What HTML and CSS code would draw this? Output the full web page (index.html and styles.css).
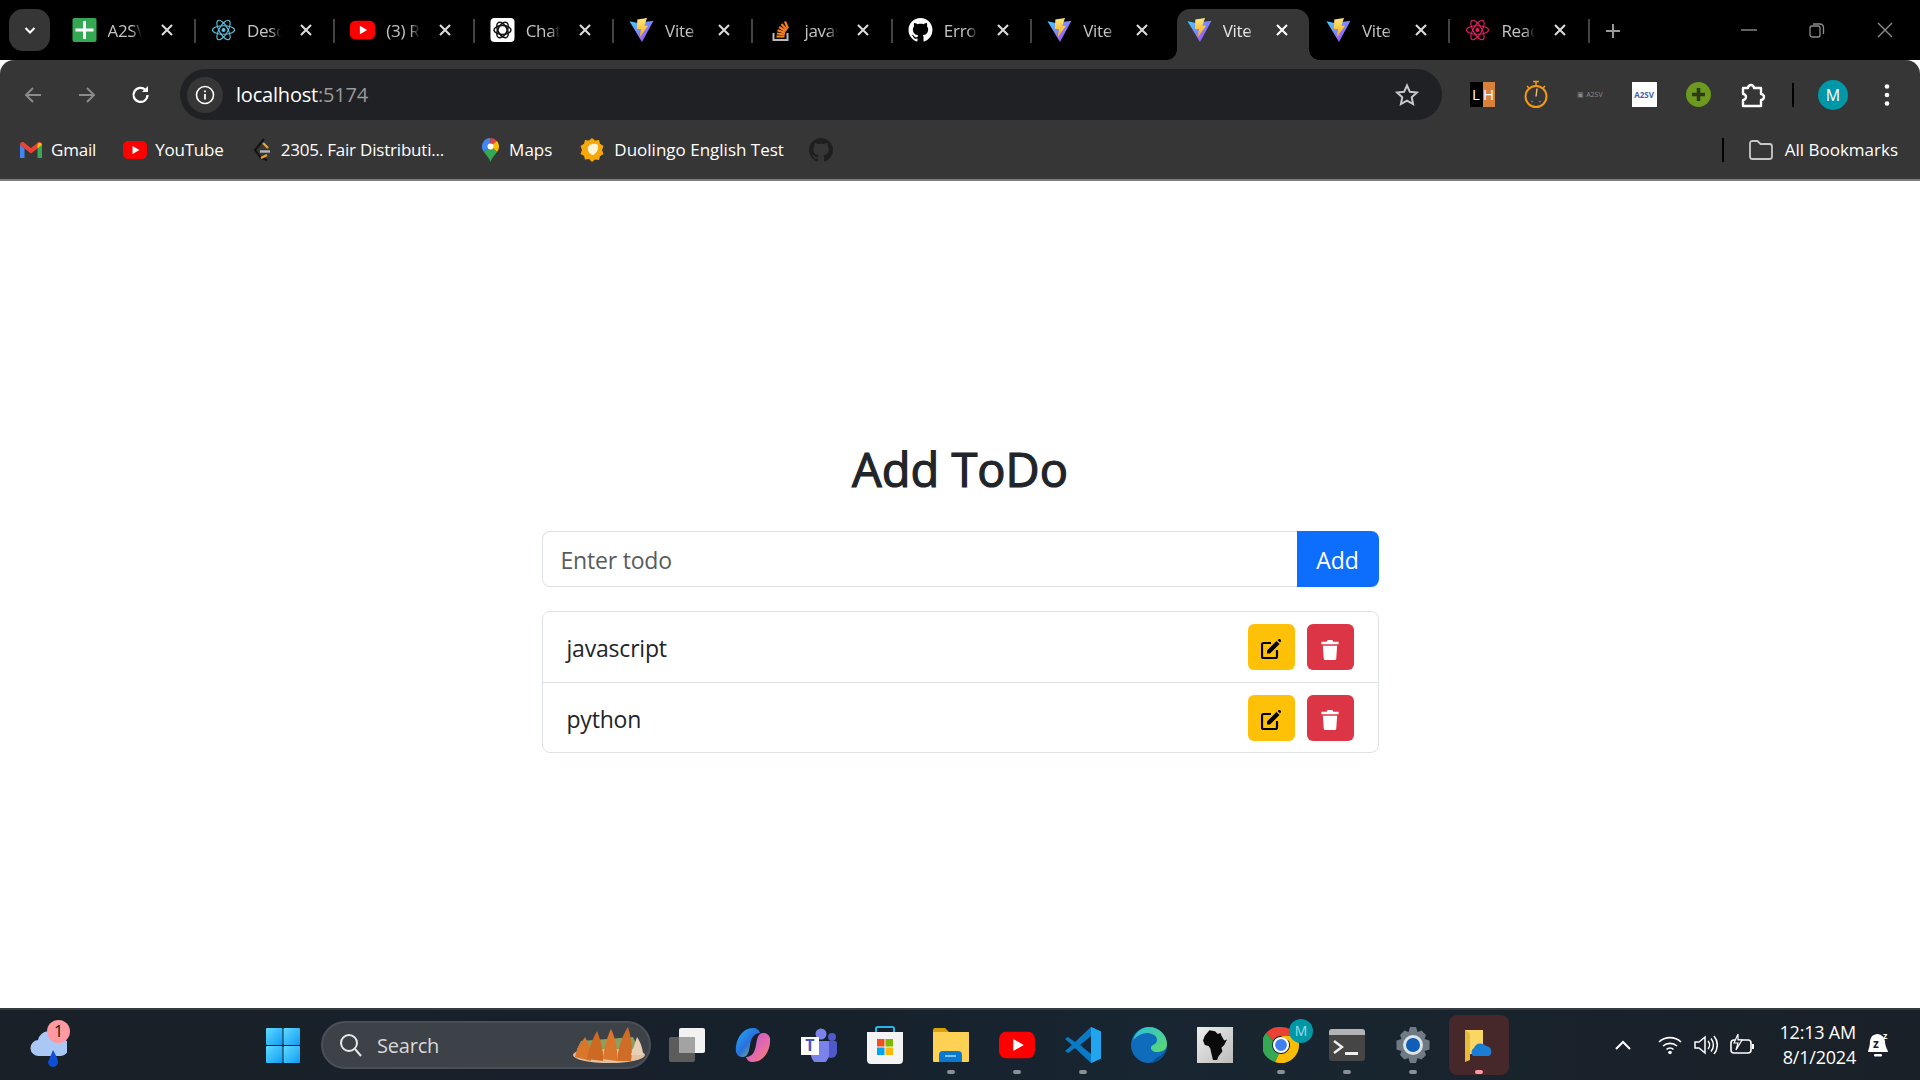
FILE: index.html
```html
<!DOCTYPE html>
<html lang="en">
<head>
  <meta charset="UTF-8" />
  <title>Vite + React</title>
  <link rel="stylesheet" href="styles.css">
</head>
<body>
  <svg class="sprite" xmlns="http://www.w3.org/2000/svg">
    <defs>
      <linearGradient id="viteBody" x1="0" y1="0" x2="1" y2="1">
        <stop offset="0%" stop-color="#41d1ff" />
        <stop offset="100%" stop-color="#bd34fe" />
      </linearGradient>
      <linearGradient id="viteBolt" x1="0" y1="0" x2="0" y2="1">
        <stop offset="0%" stop-color="#ffea83" />
        <stop offset="100%" stop-color="#ffa800" />
      </linearGradient>
      <linearGradient id="copilotA" x1="0" y1="0" x2="1" y2="1">
        <stop offset="0%" stop-color="#1fb4f0" />
        <stop offset="50%" stop-color="#2a6fe0" />
        <stop offset="100%" stop-color="#9fd04a" />
      </linearGradient>
      <linearGradient id="copilotB" x1="0" y1="0" x2="1" y2="1">
        <stop offset="0%" stop-color="#b05ad8" />
        <stop offset="60%" stop-color="#e86aa8" />
        <stop offset="100%" stop-color="#f58a50" />
      </linearGradient>
      <linearGradient id="winLogo" x1="0" y1="0" x2="1" y2="1">
        <stop offset="0%" stop-color="#5fdcff" />
        <stop offset="100%" stop-color="#0f9bf5" />
      </linearGradient>
      <linearGradient id="edgeWave" x1="0" y1="0" x2="1" y2="1">
        <stop offset="0%" stop-color="#2ac0d8" />
        <stop offset="100%" stop-color="#5fd96e" />
      </linearGradient>
      <symbol id="vite" viewBox="0 0 26 26">
        <path d="M0 3.500 L9 5.500 L18 4 L26 3 L13.500 26 Z" fill="url(#viteBody)" />
        <path d="M8.500 1.500 L19 0 L16 8.500 L20 8.500 L11 21 L12.500 12 L8 12 Z" fill="url(#viteBolt)" />
      </symbol>
      <symbol id="youtube" viewBox="0 0 24 18">
        <rect width="24" height="18" rx="5" fill="#f00" />
        <path d="M9.500 5 L16.500 9 L9.500 13 Z" fill="#fff" />
      </symbol>
      <symbol id="github" viewBox="0 0 16 16">
        <path d="M8 0C3.580 0 0 3.580 0 8c0 3.540 2.290 6.530 5.470 7.590.4.070.55-.17.55-.38 0-.19-.01-.82-.01-1.490-2.010.37-2.530-.49-2.690-.94-.09-.23-.48-.94-.82-1.130-.28-.15-.68-.52-.01-.53.63-.01 1.080.58 1.230.82.72 1.210 1.870.87 2.330.66.07-.52.28-.87.51-1.070-1.780-.2-3.640-.89-3.640-3.950 0-.87.31-1.590.82-2.150-.08-.2-.36-1.020.08-2.120 0 0 .67-.21 2.200.82.64-.18 1.320-.27 2-.27s1.360.09 2 .27c1.530-1.040 2.200-.82 2.200-.82.44 1.100.16 1.920.08 2.120.51.56.82 1.270.82 2.150 0 3.070-1.870 3.750-3.650 3.950.29.25.54.73.54 1.480 0 1.070-.01 1.930-.01 2.200 0 .21.15.46.55.38A8.010 8.010 0 0 0 16 8c0-4.420-3.580-8-8-8z" fill="currentColor" />
      </symbol>
      <symbol id="react" viewBox="0 0 24 24">
        <g fill="none" stroke="currentColor" stroke-width="1.100">
          <ellipse cx="12" cy="12" rx="11" ry="4.300" />
          <ellipse cx="12" cy="12" rx="11" ry="4.300" transform="rotate(60 12 12)" />
          <ellipse cx="12" cy="12" rx="11" ry="4.300" transform="rotate(120 12 12)" />
        </g>
        <circle cx="12" cy="12" r="2" fill="currentColor" />
      </symbol>
      <symbol id="close" viewBox="0 0 12 12">
        <path d="M1 1 L11 11 M11 1 L1 11" stroke="currentColor" stroke-width="2.100" fill="none" />
      </symbol>
      <symbol id="running" viewBox="0 0 8 4"><rect width="8" height="4" rx="2" fill="currentColor" /></symbol>
    </defs>
  </svg>

  <header class="tabstrip">
    <button class="tab-search">
      <svg width="14" height="14" viewBox="0 0 14 14"><path d="M2.500 5 L7 9.500 L11.500 5" fill="none" stroke="#fff" stroke-width="2" /></svg>
    </button>
    <div class="tabs">
      <div class="tab">
        <svg class="tab-icon" viewBox="0 0 24 24"><rect width="24" height="24" rx="2" fill="#34a853" /><path d="M10.500 3h3v7.500H21v3h-7.500V21h-3v-7.500H3v-3h7.500z" fill="#fff" /></svg>
        <span class="tab-title">A2SV</span>
        <svg class="tab-close"><use href="#close" /></svg>
      </div>
      <div class="tab">
        <svg class="tab-icon icon-react-blue"><use href="#react" /></svg>
        <span class="tab-title">Describing</span>
        <svg class="tab-close"><use href="#close" /></svg>
      </div>
      <div class="tab">
        <svg class="tab-icon"><use href="#youtube" /></svg>
        <span class="tab-title">(3) React</span>
        <svg class="tab-close"><use href="#close" /></svg>
      </div>
      <div class="tab">
        <svg class="tab-icon" viewBox="0 0 24 24"><rect width="24" height="24" rx="4" fill="#fff" /><g fill="none" stroke="#111" stroke-width="1.500"><ellipse cx="12" cy="12" rx="8.500" ry="4.500" /><ellipse cx="12" cy="12" rx="8.500" ry="4.500" transform="rotate(60 12 12)" /><ellipse cx="12" cy="12" rx="8.500" ry="4.500" transform="rotate(120 12 12)" /></g></svg>
        <span class="tab-title">ChatGPT</span>
        <svg class="tab-close"><use href="#close" /></svg>
      </div>
      <div class="tab">
        <svg class="tab-icon"><use href="#vite" /></svg>
        <span class="tab-title">Vite + React</span>
        <svg class="tab-close"><use href="#close" /></svg>
      </div>
      <div class="tab">
        <svg class="tab-icon" viewBox="0 0 24 24"><path d="M5 15v7h14v-7" fill="none" stroke="#bcbbbb" stroke-width="2" /><g stroke="#f48024" stroke-width="2.200"><path d="M8 18.500h8" /><path d="M8.300 15.500l8 1" /><path d="M9 12.300l7.600 2.600" /><path d="M10.600 9l6.800 4.200" /><path d="M13 6l5.400 6" /><path d="M16.500 3.500l3 7" /></g></svg>
        <span class="tab-title">javascript</span>
        <svg class="tab-close"><use href="#close" /></svg>
      </div>
      <div class="tab">
        <svg class="tab-icon icon-white"><use href="#github" /></svg>
        <span class="tab-title">Error</span>
        <svg class="tab-close"><use href="#close" /></svg>
      </div>
      <div class="tab tab-before-active">
        <svg class="tab-icon"><use href="#vite" /></svg>
        <span class="tab-title">Vite + React</span>
        <svg class="tab-close"><use href="#close" /></svg>
      </div>
      <div class="tab active">
        <svg class="tab-icon"><use href="#vite" /></svg>
        <span class="tab-title">Vite + React</span>
        <svg class="tab-close"><use href="#close" /></svg>
      </div>
      <div class="tab">
        <svg class="tab-icon"><use href="#vite" /></svg>
        <span class="tab-title">Vite + React</span>
        <svg class="tab-close"><use href="#close" /></svg>
      </div>
      <div class="tab">
        <svg class="tab-icon icon-react-pink"><use href="#react" /></svg>
        <span class="tab-title">React App</span>
        <svg class="tab-close"><use href="#close" /></svg>
      </div>
    </div>
    <svg class="new-tab" width="18" height="18" viewBox="0 0 18 18"><path d="M9 2v14M2 9h14" stroke="#9a9a9a" stroke-width="2" /></svg>
    <div class="window-controls">
      <svg width="16" height="16" viewBox="0 0 16 16"><path d="M0 8h16" stroke="#8d8d8d" stroke-width="1.400" /></svg>
      <svg width="16" height="16" viewBox="0 0 16 16"><rect x="1" y="4" width="10" height="11" rx="2" fill="none" stroke="#8d8d8d" stroke-width="1.300" /><path d="M4 2h7a3.500 3.500 0 0 1 3.500 3.500V12" fill="none" stroke="#8d8d8d" stroke-width="1.300" /></svg>
      <svg width="16" height="16" viewBox="0 0 16 16"><path d="M1 1l14 14M15 1L1 15" stroke="#8d8d8d" stroke-width="1.400" /></svg>
    </div>
  </header>

  <nav class="toolbar">
    <div class="nav-btn">
      <svg width="20" height="20" viewBox="0 0 20 20"><path d="M18 10H3M10 3l-7 7 7 7" fill="none" stroke="#8b8b8b" stroke-width="2" /></svg>
    </div>
    <div class="nav-btn">
      <svg width="20" height="20" viewBox="0 0 20 20"><path d="M2 10h15M10 3l7 7-7 7" fill="none" stroke="#8b8b8b" stroke-width="2" /></svg>
    </div>
    <div class="nav-btn">
      <svg width="20" height="20" viewBox="0 0 20 20"><path d="M16.500 10a7 7 0 1 1-2-5" fill="none" stroke="#fff" stroke-width="2.200" /><path d="M17 1v6h-6z" fill="#fff" /></svg>
    </div>
    <div class="address">
      <div class="site-info">
        <svg width="20" height="20" viewBox="0 0 20 20"><circle cx="10" cy="10" r="8.500" fill="none" stroke="#fff" stroke-width="1.600" /><path d="M10 9v5.500M10 5.500v1.800" stroke="#fff" stroke-width="1.800" /></svg>
      </div>
      <span class="url">localhost<span class="url-port">:5174</span></span>
      <svg class="star" width="24" height="24" viewBox="0 0 24 24"><path d="M12 2.500l2.900 6.300 6.900.8-5.100 4.700 1.400 6.800-6.100-3.400-6.100 3.400 1.400-6.800-5.100-4.700 6.900-.8z" fill="none" stroke="#c7c7c7" stroke-width="2" /></svg>
    </div>
    <div class="extensions">
      <div class="ext"><span class="ext-lh"><span class="lh-l">L</span><span class="lh-h">H</span></span></div>
      <div class="ext">
        <svg width="24" height="30" viewBox="0 0 24 30"><path d="M9 1.500h6M12 1.500v4M3 6l2 2M21 6l-2 2" stroke="#f19a12" stroke-width="1.600" /><circle cx="12" cy="16.500" r="10.500" fill="none" stroke="#f19a12" stroke-width="2" /><path d="M12 16.500l1-8" stroke="#e8c27a" stroke-width="1.400" /><path d="M7.500 21.500h1M15.500 21.500h1" stroke="#aaa" stroke-width="1.600" /></svg>
      </div>
      <div class="ext"><span class="ext-apsv-dim">▣ A2SV</span></div>
      <div class="ext"><span class="ext-apsv">A2SV</span></div>
      <div class="ext">
        <svg width="25" height="25" viewBox="0 0 25 25"><circle cx="12.500" cy="12.500" r="12.500" fill="#6c9a1f" /><path d="M12.500 6v13M6 12.500h13" stroke="#2d3a12" stroke-width="3.500" /></svg>
      </div>
      <div class="ext">
        <svg class="ext-puzzle" width="26" height="26" viewBox="0 0 26 26"><path d="M3 6h5a3 3 0 0 1 6 0h7v6a3 3 0 0 1 0 6v6H3v-6a3 3 0 0 0 0-6z" fill="none" stroke="#fff" stroke-width="2.400" stroke-linejoin="round" /></svg>
      </div>
    </div>
    <div class="toolbar-sep"></div>
    <div class="ext"><span class="avatar">M</span></div>
    <div class="ext">
      <svg width="6" height="24" viewBox="0 0 6 24"><circle cx="3" cy="3.500" r="2.300" fill="#fff" /><circle cx="3" cy="12" r="2.300" fill="#fff" /><circle cx="3" cy="20.500" r="2.300" fill="#fff" /></svg>
    </div>
  </nav>

  <div class="bookmarks">
    <a class="bookmark">
      <svg width="22" height="16" viewBox="0 0 22 16"><path d="M0 2.500V16h4.500V6.500z" fill="#4285f4" /><path d="M22 2.500V16h-4.500V6.500z" fill="#34a853" /><path d="M0 2.500C0 .5 2.300-.7 4 .5L11 6l7-5.500c1.700-1.200 4 0 4 2L17.500 6.500 11 11.500 4.500 6.500z" fill="#ea4335" /><path d="M17.500 6.500V2l1-.9c1.500-1 3.500 0 3.500 1.900z" fill="#fbbc04" /></svg>
      Gmail
    </a>
    <a class="bookmark bookmark-yt">
      <svg width="24" height="18"><use href="#youtube" /></svg>
      YouTube
    </a>
    <a class="bookmark bookmark-leet">
      <svg width="20" height="24" viewBox="0 0 20 24"><path d="M12 1L3 12l6 8 6 2" fill="none" stroke="#111" stroke-width="2" /><path d="M11 5l5 5M9 20l6-3" fill="none" stroke="#f0a020" stroke-width="2.400" /><path d="M8 13.500h10" stroke="#b5b5b5" stroke-width="2.400" /></svg>
      2305. Fair Distributi...
    </a>
    <a class="bookmark bookmark-maps">
      <svg width="17" height="24" viewBox="0 0 17 24"><path d="M8.500 0A8.500 8.500 0 0 0 2 14l6.500-6z" fill="#4285f4" /><path d="M8.500 0A8.500 8.500 0 0 1 15 3L8.500 8z" fill="#ea4335" /><path d="M15 3a8.500 8.500 0 0 1 0 11L8.500 8z" fill="#fbbc04" /><path d="M2 14l6.500-6L15 14c-2 3-5.500 6-6.500 10C7.500 20 4 17 2 14z" fill="#34a853" /><circle cx="8.500" cy="8.500" r="3" fill="#fff" /></svg>
      Maps
    </a>
    <a class="bookmark bookmark-duo">
      <svg width="24" height="24" viewBox="0 0 24 24"><path d="M12 0l3 2.500 4-.5 1 3.700 3.500 2.300-1.500 4 1.500 4-3.500 2.300-1 3.700-4-.5L12 24l-3-3-4 .5-1-3.700L.5 16l1.500-4-1.500-4L4 5.700 5 2l4 .5z" fill="#f7a70a" /><path d="M8 9c2-4 8-4 10-2 1 4-2 9-5 10-3 0-6-4-5-8z" fill="#fff3d8" /></svg>
      Duolingo English Test
    </a>
    <svg class="bookmark-gh"><use href="#github" /></svg>
    <div class="bookmarks-end">
      <span class="bookmarks-sep"></span>
      <a class="bookmark">
        <svg width="24" height="20" viewBox="0 0 24 20"><path d="M1 3.500A2.500 2.500 0 0 1 3.500 1h5l3 3h9A2.500 2.500 0 0 1 23 6.500v10a2.500 2.500 0 0 1-2.500 2.500h-17A2.500 2.500 0 0 1 1 16.500z" fill="none" stroke="#c7c7c7" stroke-width="1.800" /></svg>
        All Bookmarks
      </a>
    </div>
  </div>

  <main class="page">
    <h1 class="page-title">Add ToDo</h1>
    <form class="todo-form">
      <input class="todo-input" type="text" placeholder="Enter todo" />
      <button class="todo-add" type="button">Add</button>
    </form>
    <ul class="todo-list">
      <li class="todo-item">
        <span class="todo-text">javascript</span>
        <div class="todo-actions">
          <button class="action action-edit" type="button">
            <svg width="20" height="20" viewBox="0 0 20 20"><path d="M10 4H2.500A1.500 1.500 0 0 0 1 5.500v12A1.500 1.500 0 0 0 2.500 19h12a1.500 1.500 0 0 0 1.500-1.500V11" fill="none" stroke="#000" stroke-width="2.200" /><path d="M6 11.500L15.500 2l3 3L9 14.500H6z" fill="#000" /><path d="M16.500 1l.8-.500a1.500 1.500 0 0 1 2.200 2.200l-.5.800z" fill="#000" /></svg>
          </button>
          <button class="action action-delete" type="button">
            <svg width="18" height="21" viewBox="0 0 18 22"><path d="M0 3h5.500l1-2h5l1 2H18v2.500H0zM1.500 7h15L15.500 21a1.500 1.500 0 0 1-1.500 1H4a1.500 1.500 0 0 1-1.500-1z" fill="#fff" /></svg>
          </button>
        </div>
      </li>
      <li class="todo-item">
        <span class="todo-text">python</span>
        <div class="todo-actions">
          <button class="action action-edit" type="button">
            <svg width="20" height="20" viewBox="0 0 20 20"><path d="M10 4H2.500A1.500 1.500 0 0 0 1 5.500v12A1.500 1.500 0 0 0 2.500 19h12a1.500 1.500 0 0 0 1.500-1.500V11" fill="none" stroke="#000" stroke-width="2.200" /><path d="M6 11.500L15.500 2l3 3L9 14.500H6z" fill="#000" /><path d="M16.500 1l.8-.500a1.500 1.500 0 0 1 2.200 2.200l-.5.800z" fill="#000" /></svg>
          </button>
          <button class="action action-delete" type="button">
            <svg width="18" height="21" viewBox="0 0 18 22"><path d="M0 3h5.500l1-2h5l1 2H18v2.500H0zM1.500 7h15L15.500 21a1.500 1.500 0 0 1-1.500 1H4a1.500 1.500 0 0 1-1.500-1z" fill="#fff" /></svg>
          </button>
        </div>
      </li>
    </ul>
  </main>

  <footer class="taskbar">
    <div class="weather">
      <svg width="38" height="46" viewBox="0 0 38 46"><path d="M10 34a8 8 0 0 1-1-16 11 11 0 0 1 21-2 9 9 0 0 1 2 18z" fill="#a9c8f5" /><path d="M24 28c2 4 5 8 5 12a5 5 0 0 1-10 0z" fill="#0f4fd8" /></svg>
      <span class="weather-badge">1</span>
    </div>
    <svg class="win-logo" width="34" height="35" viewBox="0 0 34 35"><g fill="url(#winLogo)"><rect width="16.500" height="17" rx="1" /><rect x="17.500" width="16.500" height="17" rx="1" /><rect y="18" width="16.500" height="17" rx="1" /><rect x="17.500" y="18" width="16.500" height="17" rx="1" /></g></svg>
    <div class="search-pill">
      <svg width="23" height="24" viewBox="0 0 23 24"><circle cx="10" cy="10" r="8" fill="none" stroke="#e8e8e8" stroke-width="2" /><path d="M16 16l6 7" stroke="#e8e8e8" stroke-width="2" /></svg>
      <span class="search-text">Search</span>
      <svg class="search-art" width="74" height="36" viewBox="0 0 74 36"><ellipse cx="38" cy="28" rx="36" ry="8" fill="#e3c0a0" /><path d="M10 14l52-4 6 12H6z" fill="#8aa060" /><path d="M4 30c2-12 8-16 10-20 3 6 7 12 6 24z" fill="#d9762c" /><path d="M16 32c2-14 8-24 10-28 3 8 7 18 6 30z" fill="#cc6a24" /><path d="M32 32c1-14 6-26 8-30 4 8 7 20 6 32z" fill="#d9762c" /><path d="M46 34c1-16 8-30 11-34 3 10 5 22 3 34z" fill="#cf6c26" /><path d="M60 28l6-18c3 4 6 12 6 18z" fill="#e8d0b8" /></svg>
    </div>
    <div class="task-apps">
      <div class="app">
        <svg width="36" height="34" viewBox="0 0 36 34"><rect x="0" y="9" width="26" height="25" rx="2" fill="#5c5c5c" /><rect x="10" y="0" width="26" height="25" rx="2" fill="#f2f2f2" /><rect x="10" y="9" width="16" height="16" fill="#a3a3a3" /></svg>
      </div>
      <div class="app">
        <svg width="36" height="36" viewBox="0 0 36 36"><path d="M1 25C0 13 7 1 18 1c4 0 6 2 7 5-6 0-9 5-10 12-1 6-2 12-7 12-4 0-6-2-7-5z" fill="url(#copilotA)" /><path d="M35 11c1 12-6 24-17 24-4 0-6-2-7-5 6 0 9-5 10-12 1-6 2-12 7-12 4 0 6 2 7 5z" fill="url(#copilotB)" /></svg>
      </div>
      <div class="app">
        <svg width="36" height="34" viewBox="0 0 36 34"><circle cx="20" cy="6" r="5.500" fill="#7b83eb" /><circle cx="31" cy="9" r="4" fill="#5059c9" /><path d="M24 13h10a2 2 0 0 1 2 2v9a6 6 0 0 1-12 0z" fill="#5059c9" /><path d="M10 13h18v14a9 9 0 0 1-18 0z" fill="#7b83eb" /><rect x="0" y="9" width="18" height="18" fill="#fff" /><text class="teams-t" x="9" y="23">T</text></svg>
      </div>
      <div class="app">
        <svg width="36" height="38" viewBox="0 0 36 38"><path d="M9 7V2.500A1.500 1.500 0 0 1 10.500 1h15A1.500 1.500 0 0 1 27 2.500V7" fill="none" stroke="#25b5e8" stroke-width="2" /><path d="M0 6h36v28a4 4 0 0 1-4 4H4a4 4 0 0 1-4-4z" fill="#f4f4f4" /><rect x="10" y="13" width="7.500" height="7.500" fill="#f25022" /><rect x="18.500" y="13" width="7.500" height="7.500" fill="#7fba00" /><rect x="10" y="21.500" width="7.500" height="7.500" fill="#00a4ef" /><rect x="18.500" y="21.500" width="7.500" height="7.500" fill="#ffb900" /></svg>
      </div>
      <div class="app app-open">
        <svg width="36" height="34" viewBox="0 0 36 34"><path d="M0 2a2 2 0 0 1 2-2h10l4 4h20v4H0z" fill="#d9a208" /><rect y="4" width="36" height="30" rx="1" fill="#fdd254" /><path d="M6 34v-7a4 4 0 0 1 4-4h15a4 4 0 0 1 4 4v7z" fill="#0a78d1" /><rect x="12" y="27" width="11" height="2" fill="#7cc4f4" /></svg>
        <svg class="dot"><use href="#running" /></svg>
      </div>
      <div class="app app-open">
        <svg width="36" height="28" viewBox="0 0 24 18"><use href="#youtube" /></svg>
        <svg class="dot"><use href="#running" /></svg>
      </div>
      <div class="app app-open">
        <svg width="36" height="36" viewBox="0 0 36 36"><path d="M26 0l10 4.500v27L26 36 10 21l-7 5-3-2 7-6-7-6 3-2 7 5z" fill="#0a7ac4" /><path d="M26 0l10 4.500v27L26 36z" fill="#22a5ef" /><path d="M26 9L15 18l11 9z" fill="#14263a" /></svg>
        <svg class="dot"><use href="#running" /></svg>
      </div>
      <div class="app">
        <svg width="36" height="36" viewBox="0 0 36 36"><circle cx="18" cy="18" r="18" fill="#0f6cbd" /><path d="M2 14C4 4 12 0 18 0c10 0 18 8 18 17 0 6-5 8-10 8-4 0-6-2-6-4 0-4 6-3 6-8 0-5-6-7-10-7S4 9 2 14z" fill="url(#edgeWave)" /><path d="M36 20c-2 9-9 16-18 16 4-1 6-3 8-6 4 0 8-4 10-10z" fill="#0a4d8c" /></svg>
      </div>
      <div class="app">
        <span class="africa-tile">
          <svg width="24" height="30" viewBox="0 0 26 32"><path d="M7 0l6 1 3 3 3-1 1 3 3 5 3-1-3 6-3 3 1 4-4 5-2 5h-4l-2-8-1-5-2-3-4-1-2-5 2-5z" fill="#0a0a0a" /></svg>
        </span>
      </div>
      <div class="app app-open app-chrome">
        <svg width="36" height="36" viewBox="0 0 36 36"><path d="M18 0a18 18 0 0 1 15.600 9H18a9 9 0 0 0-8 5L3 6A18 18 0 0 1 18 0z" fill="#ea4335" /><path d="M3 6l7 8a9 9 0 0 0 6 12.800L12 35A18 18 0 0 1 3 6z" fill="#34a853" /><path d="M33.600 9A18 18 0 0 1 12 35l4-8.200A9 9 0 0 0 26 14l-8-5z" fill="#fbbc04" /><circle cx="18" cy="18" r="7" fill="#3f7ff0" stroke="#fff" stroke-width="2.200" /></svg>
        <span class="chrome-badge">M</span>
        <svg class="dot"><use href="#running" /></svg>
      </div>
      <div class="app app-open">
        <svg width="36" height="32" viewBox="0 0 36 32"><rect width="36" height="32" rx="3" fill="#454545" /><path d="M0 3a3 3 0 0 1 3-3h30a3 3 0 0 1 3 3v3H0z" fill="#b3b3b3" /><path d="M5 12l8 6-8 6" fill="none" stroke="#eee" stroke-width="2.400" /><rect x="16" y="23" width="13" height="3" fill="#eee" /></svg>
        <svg class="dot"><use href="#running" /></svg>
      </div>
      <div class="app app-open">
        <svg width="36" height="36" viewBox="0 0 36 36"><path d="M15 0h6l1.500 5 4-1.500 4.500 4.500-1.500 4 5 1.500v9l-5 1.500 1.500 4-4.500 4.500-4-1.500L21 36h-6l-1.500-5-4 1.500L5 28l1.500-4-5-1.500v-9l5-1.500L5 8l4.500-4.500 4 1.500z" fill="#707a85" /><circle cx="18" cy="18" r="10" fill="#dfe4ea" /><circle cx="18" cy="18" r="7" fill="#0f5fb8" /></svg>
        <svg class="dot"><use href="#running" /></svg>
      </div>
      <div class="app app-open app-active">
        <svg width="28" height="34" viewBox="0 0 28 34"><path d="M0 2h18v24H5l-5 6z" fill="#fad765" /><path d="M0 2l5 3v27l-5 2z" fill="#e8b93a" /><path d="M8 28a5 5 0 0 1 1-8 7 7 0 0 1 12-2 5.500 5.500 0 0 1 3 10z" fill="#1a7fd4" /></svg>
        <svg class="dot"><use href="#running" /></svg>
      </div>
    </div>
    <div class="tray">
      <svg width="18" height="12" viewBox="0 0 18 12"><path d="M2 10l7-7 7 7" fill="none" stroke="#fff" stroke-width="2" /></svg>
      <svg class="tray-wifi" width="24" height="20" viewBox="0 0 24 20"><g fill="none" stroke="#fff" stroke-width="1.600"><path d="M1 7a16 16 0 0 1 22 0" /><path d="M5 11a10.500 10.500 0 0 1 14 0" /><path d="M8.500 14.500a5 5 0 0 1 7 0" /></g><circle cx="12" cy="17.500" r="1.800" fill="#fff" /></svg>
      <svg class="tray-volume" width="24" height="22" viewBox="0 0 24 22"><path d="M1 8h4l6-5v16l-6-5H1z" fill="none" stroke="#fff" stroke-width="1.500" /><path d="M14 7a6 6 0 0 1 0 8M17 4.500a10 10 0 0 1 0 13M20 2a14 14 0 0 1 0 18" fill="none" stroke="#fff" stroke-width="1.500" /></svg>
      <svg class="tray-battery" width="25" height="22" viewBox="0 0 25 22"><rect x="1" y="6" width="20" height="13" rx="3" fill="none" stroke="#fff" stroke-width="1.600" /><rect x="22" y="10" width="2" height="5" fill="#fff" /><path d="M8 0L4 9h4l-2 7 6-10H8z" fill="#1b2027" stroke="#fff" stroke-width="1.200" /></svg>
      <div class="clock">
        <span>12:13 AM</span>
        <span>8/1/2024</span>
      </div>
      <svg class="tray-bell" width="22" height="26" viewBox="0 0 22 26"><path d="M9 2a8 8 0 0 1 8 7c0 6 3 9 3 11H0c0-2 2-5 2-11a8 8 0 0 1 7-7z" fill="#fff" /><rect x="6" y="22" width="8" height="2.500" rx="1" fill="#fff" /><text class="bell-z" x="5" y="16">z</text><text class="bell-z-top" x="15" y="7">z</text></svg>
    </div>
  </footer>
</body>
</html>
```

FILE: styles.css
```css
* {
  box-sizing: border-box;
}

html, body {
  margin: 0;
  padding: 0;
  height: 100%;
}

body {
  width: 1920px;
  height: 1080px;
  display: flex;
  flex-direction: column;
  overflow: hidden;
  background: #fff;
  font-family: "Open Sans", "Noto Sans", sans-serif;
}

.sprite {
  width: 0;
  height: 0;
  position: absolute;
}

/* Tab strip */
.tabstrip {
  height: 60px;
  flex: none;
  display: flex;
  align-items: flex-start;
  background: #000;
  padding: 9px 0 0 9px;
}

.tab-search {
  width: 41px;
  height: 42px;
  margin-right: 6.500px;
  flex: none;
  display: flex;
  align-items: center;
  justify-content: center;
  padding: 0;
  border: none;
  border-radius: 14px;
  background: #363636;
}

.tabs {
  display: flex;
}

.tab {
  width: 139.400px;
  height: 51px;
  flex: none;
  display: flex;
  align-items: flex-start;
  padding: 9px 0 0 15px;
  position: relative;
}

.tab::after {
  content: "";
  position: absolute;
  right: 0;
  top: 10px;
  width: 2px;
  height: 24px;
  background: #444;
}

.tab-before-active::after {
  display: none;
}

.tab.active::before {
  content: "";
  position: absolute;
  left: 5px;
  right: 2px;
  top: 0;
  bottom: 0;
  background: #363636;
  border-radius: 13px 13px 0 0;
}

/* little outward curves at the foot of the active tab */
.tab.active::after {
  left: -5px;
  right: -8px;
  top: auto;
  bottom: 0;
  width: auto;
  height: 10px;
  background:
    radial-gradient(circle at 0 0, #000 9.500px, #363636 10px) left bottom / 10px 10px no-repeat,
    radial-gradient(circle at 100% 0, #000 9.500px, #363636 10px) right bottom / 10px 10px no-repeat;
}

.tab > * {
  position: relative;
}

.tab-icon {
  width: 25px;
  height: 24px;
  flex: none;
}

.icon-react-blue {
  color: #5dc3df;
}

.icon-react-pink {
  color: #e81e62;
}

.icon-white {
  color: #fff;
}

.tab-title {
  width: 34px;
  margin-left: 11px;
  overflow: hidden;
  white-space: nowrap;
  color: #c4c4c4;
  font-size: 17px;
  line-height: 26px;
  letter-spacing: -0.300px;
  -webkit-mask-image: linear-gradient(to right, #000 70%, transparent);
  mask-image: linear-gradient(to right, #000 70%, transparent);
}

.tab.active .tab-title {
  color: #e6e6e6;
}

.tab-close {
  width: 12px;
  height: 12px;
  flex: none;
  margin: 6px 0 0 19px;
  color: #dcdcdc;
}

.tab.active .tab-close {
  color: #fff;
}

.new-tab {
  flex: none;
  margin: 13px 0 0 14px;
}

.window-controls {
  margin-left: auto;
  display: flex;
  gap: 52px;
  padding: 13px 27px 0 0;
}

/* Toolbar */
.toolbar {
  height: 62px;
  flex: none;
  display: flex;
  align-items: flex-start;
  padding: 9px 0 0 6px;
  background: #363636;
  border-radius: 14px 14px 0 0;
  position: relative;
}

.nav-btn {
  width: 54px;
  height: 51px;
  flex: none;
  display: flex;
  align-items: center;
  justify-content: center;
}

.address {
  width: 1262px;
  height: 51px;
  margin-left: 12px;
  flex: none;
  display: flex;
  align-items: center;
  padding: 0 23px 0 7px;
  background: #202124;
  border-radius: 26px;
}

.site-info {
  width: 36px;
  height: 36px;
  flex: none;
  display: flex;
  align-items: center;
  justify-content: center;
  border-radius: 50%;
  background: #363636;
}

.url {
  margin-left: 13px;
  color: #fff;
  font-size: 20px;
  letter-spacing: -0.200px;
}

.url-port {
  color: #9a9a9a;
}

.star {
  margin-left: auto;
}

.extensions {
  display: flex;
  margin-left: 13px;
}

.ext {
  width: 54px;
  height: 51px;
  flex: none;
  display: flex;
  align-items: center;
  justify-content: center;
}

.ext-puzzle {
  margin-left: 2px;
}

.ext-lh {
  display: flex;
  width: 25px;
  height: 25px;
  font-size: 15px;
  line-height: 25px;
  text-align: center;
  color: #fff;
}

.lh-l {
  width: 13px;
  background: #000;
}

.lh-h {
  width: 12px;
  background: #d8813a;
}

.ext-apsv-dim {
  color: #8a8a8a;
  font-size: 7px;
  white-space: nowrap;
}

.ext-apsv {
  width: 25px;
  height: 25px;
  display: block;
  background: #fff;
  color: #3f62b0;
  font-size: 8px;
  font-weight: 700;
  line-height: 25px;
  text-align: center;
}

.toolbar-sep {
  width: 2px;
  height: 24px;
  margin: 14px 12px 0 13px;
  flex: none;
  background: #000;
}

.avatar {
  width: 30px;
  height: 30px;
  border-radius: 50%;
  background: #0097a7;
  color: #fff;
  font-size: 16px;
  line-height: 30px;
  text-align: center;
}

/* Bookmarks */
.bookmarks {
  height: 59px;
  flex: none;
  display: flex;
  align-items: center;
  padding: 0 22px 2px 20px;
  background: #363636;
  border-bottom: 2px solid #7d7d7d;
  color: #fff;
  font-size: 17px;
  letter-spacing: -0.200px;
}

.bookmark {
  display: flex;
  align-items: center;
  gap: 9px;
  margin-right: 27px;
  white-space: nowrap;
}

.bookmark-yt {
  gap: 8px;
  margin-right: 28px;
}

.bookmark-leet {
  gap: 9px;
  margin-right: 38px;
}

.bookmark-maps {
  gap: 10px;
  letter-spacing: 0;
  margin-right: 28px;
}

.bookmark-duo {
  gap: 10px;
  letter-spacing: 0;
  margin-right: 25px;
}

.bookmark-gh {
  width: 24px;
  height: 24px;
  color: #1f1f1f;
}

.bookmarks-end {
  margin-left: auto;
  display: flex;
  align-items: center;
  letter-spacing: 0;
}

.bookmarks-end .bookmark {
  gap: 12px;
  margin-right: 0;
}

.bookmarks-sep {
  width: 2px;
  height: 24px;
  margin-right: 25px;
  background: #000;
}

/* Todo page */
.page {
  flex: 1;
  min-height: 0;
  display: flex;
  flex-direction: column;
  align-items: center;
  justify-content: center;
  padding-top: 5px;
  color: #212529;
}

/* no medium weight installed, so the regular cut gets a thin stroke */
.page-title {
  margin: 0 0 34px;
  font-size: 47px;
  font-weight: 400;
  line-height: 1.2;
  -webkit-text-stroke: 1.200px #212529;
}

.todo-form {
  width: 837px;
  height: 56px;
  display: flex;
  margin-bottom: 24px;
}

.todo-input {
  flex: 1;
  min-width: 0;
  padding: 2px 18px 0;
  border: 1px solid #dee2e6;
  border-right: none;
  border-radius: 8px 0 0 8px;
  outline: none;
  font: inherit;
  font-size: 23px;
  color: #212529;
  letter-spacing: -0.200px;
}

.todo-input::placeholder {
  color: #595c5f;
  opacity: 1;
}

.todo-add {
  width: 82px;
  flex: none;
  padding: 2px 0 0;
  border: none;
  border-radius: 0 8px 8px 0;
  background: #0d6efd;
  color: #fff;
  font: inherit;
  font-size: 23px;
}

.todo-list {
  width: 837px;
  margin: 0;
  padding: 0;
  list-style: none;
  border: 1px solid #dee2e6;
  border-radius: 8px;
}

.todo-item {
  height: 70px;
  display: flex;
  align-items: center;
  padding: 0 24px;
}

.todo-item + .todo-item {
  border-top: 1px solid #dee2e6;
}

.todo-text {
  padding-top: 2px;
  font-size: 23px;
  letter-spacing: -0.200px;
}

.todo-actions {
  margin-left: auto;
  display: flex;
  gap: 12px;
}

.action {
  width: 47px;
  height: 46px;
  display: flex;
  align-items: center;
  justify-content: center;
  padding: 4px 0 0;
  border: none;
  border-radius: 6px;
}

.action-edit {
  background: #ffc107;
}

.action-delete {
  background: #dc3545;
}

/* Taskbar */
.taskbar {
  height: 72px;
  flex: none;
  display: flex;
  align-items: center;
  background: linear-gradient(to right, #1a2027 0%, #16212c 45%, #182631 60%, #1a2027 100%);
  border-top: 2px solid #363b40;
}

.weather {
  width: 38px;
  height: 46px;
  margin-left: 29px;
  flex: none;
  position: relative;
}

.weather-badge {
  position: absolute;
  left: 18px;
  top: -2px;
  width: 23px;
  height: 23px;
  border-radius: 50%;
  background: #ff9aa2;
  color: #111;
  font-size: 16px;
  line-height: 23px;
  text-align: center;
}

.win-logo {
  margin-left: 199px;
  flex: none;
}

.search-pill {
  width: 330px;
  height: 48px;
  margin-left: 21px;
  flex: none;
  display: flex;
  align-items: center;
  padding: 0 4px 0 16px;
  border: 2px solid #4a5058;
  border-radius: 24px;
  background: #3c4248;
}

.search-text {
  margin-left: 15px;
  color: #d8d8d8;
  font-size: 20px;
  letter-spacing: -0.200px;
}

.search-art {
  margin-left: auto;
}

.task-apps {
  display: flex;
  margin-left: 3px;
}

.app {
  width: 66px;
  height: 60px;
  flex: none;
  display: flex;
  flex-direction: column;
  align-items: center;
  justify-content: center;
  position: relative;
}

.dot {
  position: absolute;
  left: 29px;
  bottom: 1px;
  width: 8px;
  height: 4px;
  color: #8c8f93;
}

.app-active {
  width: 60px;
  margin-left: 3px;
  background: #46272a;
  border-radius: 8px;
}

.app-active .dot {
  left: 26px;
  color: #ff9aa2;
}

.africa-tile {
  width: 36px;
  height: 36px;
  display: flex;
  align-items: center;
  justify-content: center;
  background: linear-gradient(135deg, #eee, #bbb);
}

.chrome-badge {
  position: absolute;
  right: 1px;
  top: 4px;
  width: 24px;
  height: 24px;
  border-radius: 50%;
  background: #0097a7;
  color: #9fdce4;
  font-size: 14px;
  line-height: 24px;
  text-align: center;
}

.teams-t {
  fill: #4b53bc;
  font-size: 16px;
  font-weight: 700;
  text-anchor: middle;
}

.tray {
  margin-left: auto;
  display: flex;
  align-items: center;
  padding-right: 30px;
  color: #fff;
}

.tray-wifi {
  margin-left: 26px;
}

.tray-volume {
  margin-left: 12px;
}

.tray-battery {
  margin-left: 12px;
}

.clock {
  margin-left: 24px;
  display: flex;
  flex-direction: column;
  align-items: flex-end;
  font-size: 18px;
  line-height: 25px;
  letter-spacing: -0.200px;
}

.tray-bell {
  margin-left: 12px;
}

.bell-z {
  fill: #1a2027;
  font-size: 12px;
  font-weight: 700;
}

.bell-z-top {
  fill: #fff;
  font-size: 9px;
  font-weight: 700;
}
```
